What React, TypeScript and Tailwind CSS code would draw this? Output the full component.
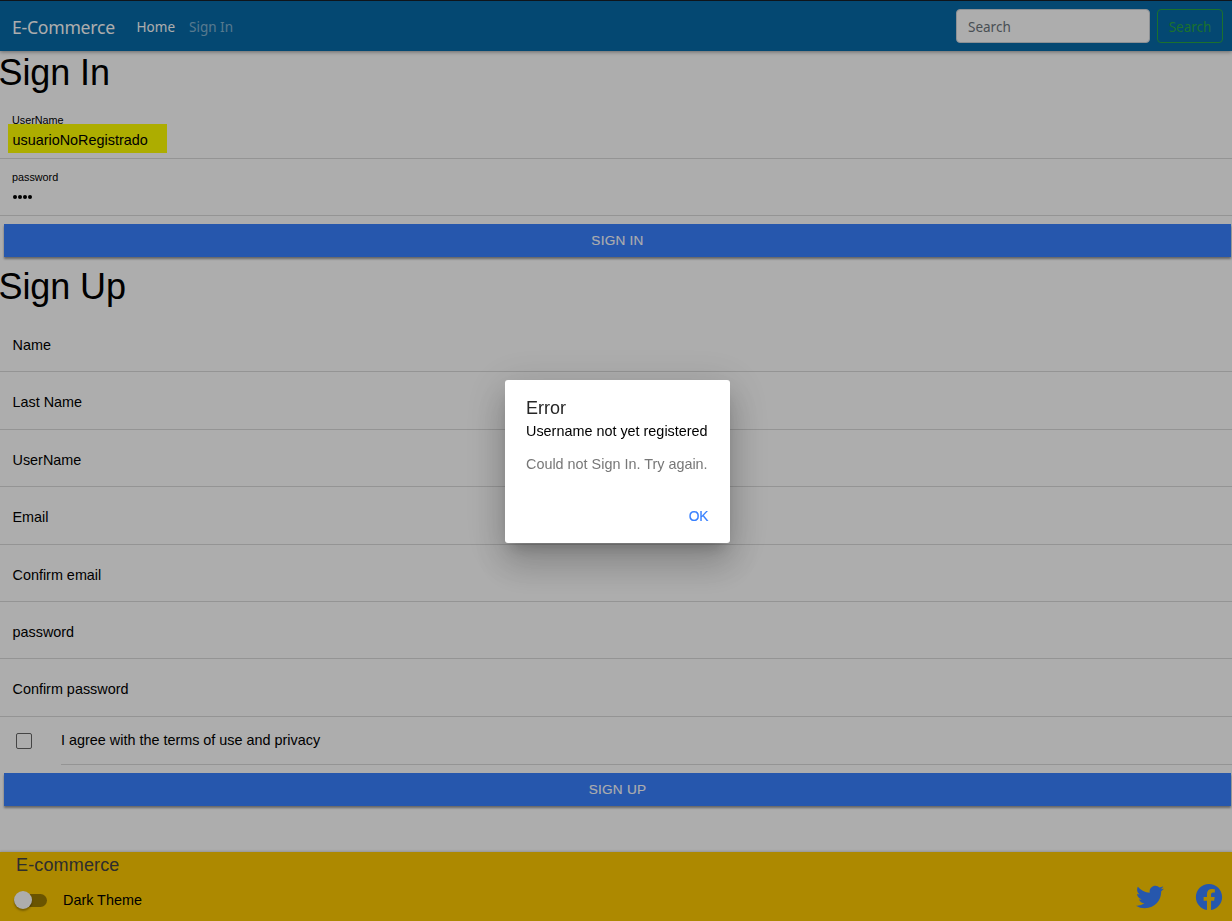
import React from 'react';
import { IoLogoFacebook, IoLogoTwitter } from 'react-icons/io5';

const signUpFields = [
  { label: 'Name', height: 'h-[58px] pt-[21px]' },
  { label: 'Last Name', height: 'h-[58px] pt-[20px]' },
  { label: 'UserName', height: 'h-[57px] pt-[20px]' },
  { label: 'Email', height: 'h-[58px] pt-[20px]' },
  { label: 'Confirm email', height: 'h-[57px] pt-[20px]' },
  { label: 'password', height: 'h-[57px] pt-[20px]' },
  { label: 'Confirm password', height: 'h-[58px] pt-[20px]' },
];

function NavBar() {
  return (
    <nav className="relative z-10 flex h-[51px] shrink-0 items-center border-t border-[#171e27] bg-[#066aa8] pl-[12px] pr-[9px] font-['Noto_Sans',sans-serif] shadow-[0_1px_4px_rgba(0,0,0,0.4)]">
      <span className="w-[124.5px] whitespace-nowrap pt-[2px] text-[17.6px] tracking-[-0.25px] text-white">E-Commerce</span>
      <span className="w-[52.5px] whitespace-nowrap pt-[3px] text-[13.5px] tracking-[0.1px] text-white">Home</span>
      <span className="whitespace-nowrap pt-[3px] text-[13.5px] text-white/50">Sign In</span>
      <div className="ml-auto flex gap-[7px] text-[13.5px]">
        <div className="flex h-[34px] w-[194px] items-center rounded-[4px] border border-[#ced4da] bg-white pl-[11px] pt-[3px] text-[#6c757d]">Search</div>
        <button className="h-[34px] w-[66px] rounded-[4px] border border-[#28a745] pt-[3px] text-[#28a745]">Search</button>
      </div>
    </nav>
  );
}

function Field({ label, height }: { label: string; height: string }) {
  return (
    <div className={`${height} shrink-0 border-b border-[#dbdbdb] pl-[12.5px] text-[14.4px] leading-[20px]`}>{label}</div>
  );
}

function SubmitButton({ children }: { children: string }) {
  return (
    <button className="mb-px ml-1 mr-px mt-2 block h-[33px] shrink-0 bg-[#3880ff] text-[13.6px] leading-[33px] tracking-[0.25px] text-white shadow-[0_2px_2px_rgba(0,0,0,0.4)] [-webkit-text-stroke:0.1px_white]">
      {children}
    </button>
  );
}

function Footer() {
  return (
    <footer className="mt-auto flex h-[69px] shrink-0 justify-between bg-[#ffca00] shadow-[0_-1px_2px_rgba(0,0,0,0.15)]">
      <div>
        <div className="pl-4 pt-[2px] text-[18px] leading-[22px] tracking-[0.15px] text-[#444]">E-commerce</div>
        <div className="mt-[14px] flex items-center pl-[14px]">
          <div className="flex h-[13px] w-[33px] items-center rounded-full bg-[#9d7c00]">
            <div className="h-[18px] w-[18px] rounded-full bg-white shadow-[0_2px_2px_rgba(0,0,0,0.3)]" />
          </div>
          <span className="pl-4 text-[14.4px] leading-[20px]">Dark Theme</span>
        </div>
      </div>
      <div className="flex items-start gap-[29px] pr-[8.5px] pt-[30px] text-[#3880ff]">
        <IoLogoTwitter className="h-[30px] w-[30px]" />
        <IoLogoFacebook className="h-[30px] w-[30px]" />
      </div>
    </footer>
  );
}

function ErrorDialog() {
  return (
    <div className="fixed inset-0 z-20 bg-black/32">
      <div
        role="alertdialog"
        className="absolute left-[505px] top-[380px] flex h-[163px] w-[225px] flex-col rounded-[3px] bg-white pl-[21px] pr-[22px] text-[#262626] shadow-[0_10px_14px_-6px_rgba(0,0,0,0.2),0_22px_34px_3px_rgba(0,0,0,0.14),0_8px_41px_7px_rgba(0,0,0,0.12)]"
      >
        <h2 className="pt-[17px] text-[18px] leading-[22px]">Error</h2>
        <h3 className="mt-[2px] whitespace-nowrap text-[14.4px] leading-[20px] text-black">Username not yet registered</h3>
        <p className="mt-[13px] whitespace-nowrap text-[14.4px] leading-[20px] text-[#777]">Could not Sign In. Try again.</p>
        <button className="ml-auto mt-[33px] text-[13.8px] leading-[20px] tracking-[-0.4px] text-[#3880ff] [-webkit-text-stroke:0.15px_#3880ff]">OK</button>
      </div>
    </div>
  );
}

export default function App() {
  return (
    <div className="flex h-[921px] w-full flex-col overflow-hidden bg-white font-['Liberation_Sans',Arial,sans-serif] text-black">
      <NavBar />
      <h1 className="-ml-[1.5px] h-[51px] shrink-0 pt-[1px] text-[36px] leading-[42px] tracking-[-0.1px]">Sign In</h1>
      <div className="h-[57px] shrink-0 border-b border-[#dbdbdb] pl-2 pt-[12px]">
        <div className="pl-1 text-[10.8px] leading-[12px]">UserName</div>
        <div className="-mt-[2px] h-[29px] w-[159px] bg-[#ffff00] pl-[4.5px] text-[14.4px] leading-[33px]">usuarioNoRegistrado</div>
      </div>
      <div className="h-[57px] shrink-0 border-b border-[#dbdbdb] pl-3 pt-[12px]">
        <div className="text-[10.8px] leading-[12px]">password</div>
        <div className="flex gap-px pl-px pt-[12px]">
          {[0, 1, 2, 3].map((dot) => (
            <span key={dot} className="h-[4px] w-[4px] rounded-full bg-black" />
          ))}
        </div>
      </div>
      <SubmitButton>SIGN IN</SubmitButton>
      <h1 className="-ml-[1.5px] h-[56px] shrink-0 pt-[8px] text-[36px] leading-[42px] tracking-[-0.1px]">Sign Up</h1>
      {signUpFields.map((field) => (
        <Field key={field.label} label={field.label} height={field.height} />
      ))}
      <div className="flex h-[48px] shrink-0 pl-4">
        <div className="mt-4 h-4 w-4 rounded-[2px] border border-[#666]" />
        <div className="ml-[29px] flex-1 border-b border-[#dbdbdb] pt-[13px] text-[14.4px] leading-[20px]">I agree with the terms of use and privacy</div>
      </div>
      <SubmitButton>SIGN UP</SubmitButton>
      <Footer />
      <ErrorDialog />
    </div>
  );
}
